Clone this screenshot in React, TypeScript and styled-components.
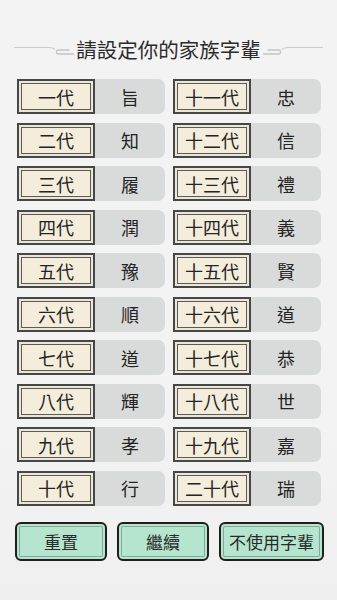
import React from "react";
import styled, { createGlobalStyle } from "styled-components";

const GlobalStyle = createGlobalStyle`
  html, body {
    margin: 0;
    padding: 0;
    background: #f2f2f2;
  }
  body {
    font-family: "Noto Sans CJK TC", "Noto Sans CJK SC", "Noto Sans", sans-serif;
    color: #262626;
  }
`;

const generations = [
  ["一代", "旨"],
  ["二代", "知"],
  ["三代", "履"],
  ["四代", "潤"],
  ["五代", "豫"],
  ["六代", "順"],
  ["七代", "道"],
  ["八代", "輝"],
  ["九代", "孝"],
  ["十代", "行"],
  ["十一代", "忠"],
  ["十二代", "信"],
  ["十三代", "禮"],
  ["十四代", "義"],
  ["十五代", "賢"],
  ["十六代", "道"],
  ["十七代", "恭"],
  ["十八代", "世"],
  ["十九代", "嘉"],
  ["二十代", "瑞"],
];

const Page = styled.div`
  width: 337px;
  height: 600px;
  box-sizing: border-box;
  padding-top: 37px;
  display: flex;
  flex-direction: column;
  background: linear-gradient(180deg, #f3f3f3 0%, #f3f3f3 70%, #efefef 100%);
  overflow: hidden;
`;

//
// title
/////////////////////////////////////////////////////////////////////////////////
const TitleRow = styled.div`
  display: flex;
  align-items: center;
  justify-content: center;
  gap: 2px;
  height: 24px;
`;
const Title = styled.h1`
  margin: 0;
  font-size: 20.5px;
  line-height: 24px;
  font-weight: 400;
  color: #2b2b2b;
`;
const OrnamentSvg = styled.svg<{ $flip?: boolean }>`
  width: 60px;
  height: 12px;
  margin-top: 4px;
  transform: ${(p) => (p.$flip ? "scaleX(-1)" : "none")};
`;

const Ornament = ({ flip }: { flip?: boolean }) => (
  <OrnamentSvg $flip={flip} viewBox="0 0 60 12" fill="none">
    <path d="M0 2.5 H35 C38 2.5 39.5 3 41 4.5" stroke="#cdcdcd" strokeWidth="1.1" />
    <path
      d="M55 5 H44.5 C42 5 41.5 9 44.5 9 H60"
      stroke="#c3c3c3"
      strokeWidth="1.3"
      strokeLinecap="round"
    />
  </OrnamentSvg>
);

//
// generation grid
/////////////////////////////////////////////////////////////////////////////////
const Grid = styled.div`
  margin-top: 18px;
  padding-left: 17px;
  display: grid;
  grid-template-columns: 148px 148px;
  grid-template-rows: repeat(10, 35px);
  grid-auto-flow: column;
  column-gap: 8px;
  row-gap: 8.5px;
`;
const Cell = styled.div`
  display: flex;
  background: #d9dbdb;
  border-radius: 7px;
`;
const GenLabel = styled.div`
  width: 78px;
  flex: none;
  box-sizing: border-box;
  display: flex;
  align-items: center;
  justify-content: center;
  background: #f4eddc;
  border: 2px solid #474747;
  box-shadow: inset 0 0 0 2px #ece6d5, inset 0 0 0 3px #5a5a5a;
  font-size: 18px;
  color: #242424;
`;
const GenValue = styled.div`
  flex: 1;
  display: flex;
  align-items: center;
  justify-content: center;
  font-size: 18px;
  color: #242424;
`;

//
// buttons
/////////////////////////////////////////////////////////////////////////////////
const ButtonRow = styled.div`
  margin-top: 16.5px;
  padding-left: 15px;
  display: flex;
  gap: 10px;
`;
const Button = styled.button<{ $wide?: boolean }>`
  width: ${(p) => (p.$wide ? "105px" : "92px")};
  height: 39px;
  box-sizing: border-box;
  padding: 0;
  border: 2px solid #1e1e1e;
  border-radius: 6px;
  background: #b6e5cf;
  box-shadow: inset 0 0 0 2px #b6e5cf, inset 0 0 0 3px #86a898;
  font-family: inherit;
  font-size: 17px;
  color: #2a2a2a;
  cursor: pointer;
`;

const App = () => {
  return (
    <>
      <GlobalStyle />
      <Page>
        <TitleRow>
          <Ornament />
          <Title>請設定你的家族字輩</Title>
          <Ornament flip />
        </TitleRow>
        <Grid>
          {generations.map(([label, value]) => (
            <Cell key={label}>
              <GenLabel>{label}</GenLabel>
              <GenValue>{value}</GenValue>
            </Cell>
          ))}
        </Grid>
        <ButtonRow>
          <Button>重置</Button>
          <Button>繼續</Button>
          <Button $wide>不使用字輩</Button>
        </ButtonRow>
      </Page>
    </>
  );
};

export default App;
